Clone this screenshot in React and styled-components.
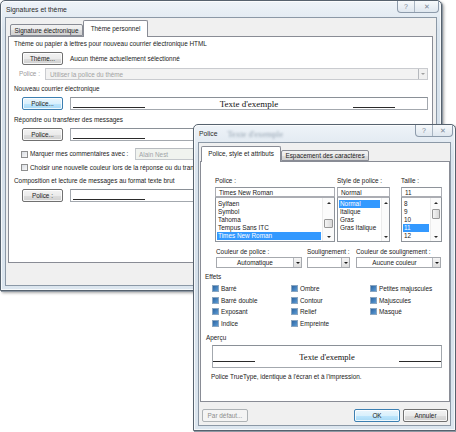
import React from "react";
import styled, { createGlobalStyle, css } from "styled-components";

const GlobalStyle = createGlobalStyle`
  html, body { margin: 0; padding: 0; background: #fff; }
  body {
    font-family: "Liberation Sans", Arial, sans-serif;
    font-size: 6.4px;
    color: #222;
  }
  * { box-sizing: border-box; }
`;

const Desktop = styled.div`
  position: relative;
  width: 456px;
  height: 432px;
  overflow: hidden;
  background: #fff;
`;

// windows sit on a free desktop, so they are placed by coordinates
const Window = styled.div`
  position: absolute;
  left: ${(p) => p.$x}px;
  top: ${(p) => p.$y}px;
  width: ${(p) => p.$w}px;
  height: ${(p) => p.$h}px;
  display: flex;
  flex-direction: column;
  padding: 0 4px 4px;
  border: 1px solid #56626e;
  border-radius: 5px 5px 0 0;
  background: linear-gradient(180deg, #eef3f8 0%, #dbe5ee 10%, #d5e0ea 55%, #dce6ef 100%);
  box-shadow: inset 0 0 0 1px rgba(255, 255, 255, 0.75), 1px 1px 0 #8e98a3,
    2px 2px 3px rgba(0, 0, 0, 0.35);
`;

const TitleBar = styled.div`
  height: ${(p) => p.$h}px;
  margin: 0 -2px;
  padding-left: 3px;
  display: flex;
  align-items: center;
  font-size: 6.8px;
  color: #2b2b2b;
  white-space: nowrap;
`;

// the back window's sample text, seen through the glass frame
const BlurText = styled.span`
  margin-left: 10px;
  font-family: "Liberation Serif", serif;
  font-size: 8.5px;
  color: #97a5b3;
  filter: blur(0.9px);
`;

const Caption = styled.div`
  align-self: flex-start;
  margin-left: auto;
  display: flex;
  height: 12px;
  border: 1px solid #8d9bab;
  border-top: none;
  border-radius: 0 0 4px 4px;
  background: linear-gradient(180deg, #f6f9fb, #dfe7ef);
  overflow: hidden;
`;

const CapBtn = styled.div`
  width: ${(p) => p.$w}px;
  display: flex;
  align-items: center;
  justify-content: center;
  font-size: 7px;
  color: #7b8896;
  & + & {
    border-left: 1px solid #a9b5c2;
  }
`;

const Client = styled.div`
  flex: 1;
  display: flex;
  flex-direction: column;
  background: #f0f0f0;
  border: 1px solid #8b98a6;
`;

const TabStrip = styled.div`
  height: 18px;
  display: flex;
  align-items: flex-end;
  padding-left: ${(p) => p.$pl}px;
`;

const Tab = styled.div`
  position: relative;
  z-index: ${(p) => (p.$active ? 1 : 0)};
  width: ${(p) => p.$w}px;
  height: ${(p) => p.$h}px;
  margin-bottom: ${(p) => (p.$active ? -1 : 0)}px;
  display: flex;
  align-items: center;
  justify-content: center;
  white-space: nowrap;
  border: 1px solid #898c95;
  border-bottom: ${(p) => (p.$active ? "none" : "1px solid #898c95")};
  border-radius: 2px 2px 0 0;
  background: ${(p) =>
    p.$active
      ? "#fff"
      : "linear-gradient(180deg, #f2f2f2 0%, #ebebeb 50%, #dddddd 51%, #d2d2d2 100%)"};
  padding-bottom: ${(p) => (p.$active ? 2 : 0)}px;
`;

const Panel = styled.div`
  height: ${(p) => p.$h}px;
  margin: ${(p) => p.$m};
  background: #fff;
  border: 1px solid #898c95;
  display: flex;
  flex-direction: column;
  padding: ${(p) => p.$pad};
`;

const Label = styled.div`
  height: 10px;
  line-height: 10px;
  margin-top: ${(p) => p.$mt || 0}px;
  margin-left: ${(p) => p.$ml || 0}px;
  white-space: nowrap;
  color: ${(p) => (p.$dim ? "#9a9a9a" : "inherit")};
  width: ${(p) => (p.$w ? `${p.$w}px` : "auto")};
  flex: none;
`;

const Row = styled.div`
  display: flex;
  align-items: center;
  height: ${(p) => p.$h}px;
  margin-top: ${(p) => p.$mt || 0}px;
  padding-left: ${(p) => p.$pl || 0}px;
  gap: ${(p) => p.$gap || 0}px;
  white-space: nowrap;
`;

const Button = styled.button`
  flex: none;
  width: ${(p) => p.$w}px;
  height: 13px;
  padding: 0;
  font: inherit;
  color: #222;
  border: 1px solid #707070;
  border-radius: 2px;
  background: linear-gradient(180deg, #f3f3f3 0%, #ebebeb 50%, #dddddd 51%, #d0d0d0 100%);
  box-shadow: inset 0 0 0 1px rgba(255, 255, 255, 0.8);
  ${(p) =>
    p.$focus &&
    css`
      border-color: #3c7fb1;
      background: linear-gradient(180deg, #eaf6fd 0%, #d9f0fc 50%, #bee6fd 51%, #a7d9f5 100%);
    `}
  ${(p) =>
    p.$disabled &&
    css`
      border-color: #adb2b5;
      background: #f4f4f4;
      color: #8d8d8d;
      box-shadow: none;
    `}
`;

const DropBtn = styled.span`
  flex: none;
  width: ${(p) => p.$w || 8}px;
  height: 100%;
  display: flex;
  align-items: center;
  justify-content: center;
  border-left: 1px solid #b5b8bd;
  background: ${(p) => (p.$dim ? "#f0f0f0" : "linear-gradient(180deg,#f6f6f6,#dedede)")};
  &::after {
    content: "";
    border-left: 2px solid transparent;
    border-right: 2px solid transparent;
    border-top: 2px solid ${(p) => (p.$dim ? "#a0a0a0" : "#1a1a1a")};
  }
`;

const Combo = styled.div`
  flex: ${(p) => (p.$w ? "none" : 1)};
  width: ${(p) => (p.$w ? `${p.$w}px` : "auto")};
  height: ${(p) => p.$h}px;
  display: flex;
  align-items: stretch;
  border: 1px solid ${(p) => (p.$dim ? "#c9cbcf" : "#a6a9ae")};
  background: ${(p) => (p.$dim ? "#f2f2f2" : "#fff")};
  color: ${(p) => (p.$dim ? "#a3a3a3" : "inherit")};
`;

const ComboText = styled.span`
  flex: 1;
  display: flex;
  align-items: center;
  justify-content: ${(p) => (p.$center ? "center" : "flex-start")};
  padding-left: ${(p) => (p.$center ? 0 : 4)}px;
  white-space: nowrap;
  overflow: hidden;
`;

const Sample = styled.div`
  flex: ${(p) => (p.$w ? "none" : 1)};
  width: ${(p) => (p.$w ? `${p.$w}px` : "auto")};
  height: ${(p) => p.$h}px;
  margin: ${(p) => p.$m || 0};
  display: flex;
  align-items: center;
  background: #fff;
  border: 1px solid #a3a8ae;
  border-top-color: #8a9097;
  overflow: hidden;
`;

const SampleLine = styled.span`
  flex: none;
  align-self: flex-end;
  width: ${(p) => p.$w}px;
  height: 1px;
  margin: 0 ${(p) => p.$mr || 0}px ${(p) => p.$mb}px ${(p) => p.$ml || 0}px;
  background: #2a2a2a;
`;

const SampleText = styled.span`
  flex: 1;
  text-align: center;
  font-family: "Liberation Serif", "Times New Roman", serif;
  font-size: ${(p) => p.$size}px;
  color: #111;
  white-space: nowrap;
`;

const PlainBox = styled.span`
  flex: none;
  width: 7px;
  height: 7px;
  border: 1px solid #8e8f8f;
  background: linear-gradient(135deg, #d9dde3, #f7f7f7);
`;

const TriBox = styled.span`
  flex: none;
  width: 7px;
  height: 7px;
  border: 1px solid #8aa6c1;
  background: #e6eef6;
  display: flex;
  align-items: center;
  justify-content: center;
  &::after {
    content: "";
    width: 5px;
    height: 5px;
    background: linear-gradient(135deg, #2d64a0, #5b9bd5);
  }
`;

const TextBox = styled.div`
  flex: none;
  width: ${(p) => p.$w}px;
  height: ${(p) => p.$h}px;
  margin-top: ${(p) => p.$mt || 0}px;
  padding-left: 3px;
  display: flex;
  align-items: center;
  border: 1px solid ${(p) => (p.$dim ? "#c4c8cc" : "#abadb3")};
  border-top-color: ${(p) => (p.$dim ? "#b8bcc0" : "#8e939a")};
  background: ${(p) => (p.$dim ? "#f0f3ef" : "#fff")};
  color: ${(p) => (p.$dim ? "#a0a4a8" : "inherit")};
  white-space: nowrap;
  overflow: hidden;
`;

/* ----- font dialog parts ----- */

const FontRow = styled.div`
  display: flex;
  margin-left: 10px;
`;

const FontCol = styled.div`
  width: ${(p) => p.$w}px;
  margin-left: ${(p) => p.$ml || 0}px;
  display: flex;
  flex-direction: column;
`;

const ListBox = styled.div`
  height: 45px;
  display: flex;
  border: 1px solid #8e939a;
  border-top-color: #abadb3;
  background: #fff;
`;

const ListItems = styled.div`
  flex: 1;
  padding: 2px 1px 0;
  overflow: hidden;
`;

const ListItem = styled.div`
  height: 8px;
  line-height: 8px;
  padding-left: 1px;
  white-space: nowrap;
  ${(p) =>
    p.$sel &&
    css`
      background: #3399ff;
      color: #fff;
    `}
`;

const ScrollBar = styled.div`
  flex: none;
  width: ${(p) => p.$w}px;
  display: flex;
  flex-direction: column;
  align-items: center;
  padding: 4px 0 3px;
  background: #fbfbfb;
  border-left: 1px solid #ececec;
`;

const Arrow = styled.span`
  flex: none;
  border-left: 2px solid transparent;
  border-right: 2px solid transparent;
  ${(p) =>
    p.$down ? "border-top: 2px solid #2b2b2b;" : "border-bottom: 2px solid #2b2b2b;"}
`;

const Thumb = styled.span`
  flex: none;
  width: ${(p) => p.$w}px;
  height: ${(p) => p.$h}px;
  margin-top: ${(p) => p.$mt}px;
  border: 1px solid #979797;
  border-radius: 1px;
  background: linear-gradient(90deg, #f4f4f4, #d8d8d8);
`;

const Grow = styled.span`
  flex: 1;
`;

const ComboRow = styled.div`
  display: flex;
  margin: 5px 0 0 11px;
`;

const EffectsGrid = styled.div`
  display: grid;
  grid-template-columns: 79px 79px 1fr;
  grid-auto-rows: 11.5px;
  margin: 1px 0 0 7px;
`;

const Effect = styled.div`
  display: flex;
  align-items: center;
  gap: 2px;
  white-space: nowrap;
  grid-column: ${(p) => p.$col};
  grid-row: ${(p) => p.$row};
`;

const Footer = styled.div`
  display: flex;
  align-items: center;
  gap: 3px;
  margin-top: 7px;
  padding: 0 2px 0 3px;
`;

const Scroll = ({ w, thumb }) => (
  <ScrollBar $w={w}>
    <Arrow />
    {thumb && <Thumb $w={w - 3} $h={thumb.h} $mt={thumb.top} />}
    <Grow />
    <Arrow $down />
  </ScrollBar>
);

// the sample text of these boxes lies under the font dialog, only the lines show
const BackSample = ({ text }) => (
  <Sample $h={13}>
    <SampleLine $w={72} $ml={2} $mb={1} />
    <SampleText $size={9}>{text}</SampleText>
    <SampleLine $w={42} $mr={32} $mb={1} />
  </Sample>
);

const effects = [
  ["Barré", 1, 1],
  ["Barré double", 1, 2],
  ["Exposant", 1, 3],
  ["Indice", 1, 4],
  ["Ombre", 2, 1],
  ["Contour", 2, 2],
  ["Relief", 2, 3],
  ["Empreinte", 2, 4],
  ["Petites majuscules", 3, 1],
  ["Majuscules", 3, 2],
  ["Masqué", 3, 3],
];

export default function App() {
  return (
    <>
      <GlobalStyle />
      <Desktop>
        <Window $x={0} $y={0} $w={442} $h={291}>
          <TitleBar $h={16}>
            Signatures et thème
            <Caption>
              <CapBtn $w={16}>?</CapBtn>
              <CapBtn $w={24}>✕</CapBtn>
            </Caption>
          </TitleBar>
          <Client>
            <TabStrip $pl={4}>
              <Tab $w={73} $h={12}>Signature électronique</Tab>
              <Tab $active $w={65} $h={17}>Thème personnel</Tab>
            </TabStrip>
            <Panel $h={227} $m="0 3px 0 2px" $pad="2px 4px 0 5px">
              <Label>Thème ou papier à lettres pour nouveau courrier électronique HTML</Label>
              <Row $h={13} $mt={3} $pl={8} $gap={7}>
                <Button $w={41}>Thème...</Button>
                Aucun thème actuellement sélectionné
              </Row>
              <Row $h={12} $mt={3} $pl={5}>
                <Label $dim $w={26}>Police :</Label>
                <Combo $dim $h={12}>
                  <ComboText>Utiliser la police du thème</ComboText>
                  <DropBtn $dim $w={9} />
                </Combo>
              </Row>
              <Label $mt={4}>Nouveau courrier électronique</Label>
              <Row $h={13} $mt={3} $pl={8} $gap={7}>
                <Button $w={41} $focus>Police...</Button>
                <BackSample text="Texte d'exemple" />
              </Row>
              <Label $mt={5}>Répondre ou transférer des messages</Label>
              <Row $h={13} $mt={3} $pl={8} $gap={7}>
                <Button $w={41}>Police...</Button>
                <BackSample />
              </Row>
              <Row $h={12} $mt={7} $pl={7} $gap={2}>
                <PlainBox />
                <Label $w={103}>Marquer mes commentaires avec :</Label>
                <TextBox $dim $w={170} $h={12}>Alain Nest</TextBox>
              </Row>
              <Row $h={12} $mt={1} $pl={7} $gap={2}>
                <PlainBox />
                Choisir une nouvelle couleur lors de la réponse ou du transfert
              </Row>
              <Label $mt={3}>Composition et lecture de messages au format texte brut</Label>
              <Row $h={13} $mt={3} $pl={8} $gap={7}>
                <Button $w={41}>Police :</Button>
                <BackSample />
              </Row>
            </Panel>
          </Client>
        </Window>

        <Window $x={193} $y={124} $w={263} $h={307}>
          <TitleBar $h={17}>
            Police
            <BlurText>Texte d'exemple</BlurText>
            <Caption>
              <CapBtn $w={16}>?</CapBtn>
              <CapBtn $w={20}>✕</CapBtn>
            </Caption>
          </TitleBar>
          <Client>
            <TabStrip $pl={2}>
              <Tab $active $w={80} $h={16}>Police, style et attributs</Tab>
              <Tab $w={88} $h={11}>Espacement des caractères</Tab>
            </TabStrip>
            <Panel $h={241} $m="0 0 0 1px" $pad="14px 6px 0 4px">
              <FontRow>
                <FontCol $w={120}>
                  <Label>Police :</Label>
                  <TextBox $w={120} $h={10} $mt={1}>Times New Roman</TextBox>
                  <ListBox>
                    <ListItems>
                      <ListItem>Sylfaen</ListItem>
                      <ListItem>Symbol</ListItem>
                      <ListItem>Tahoma</ListItem>
                      <ListItem>Tempus Sans ITC</ListItem>
                      <ListItem $sel>Times New Roman</ListItem>
                    </ListItems>
                    <Scroll w={12} thumb={{ top: 15, h: 9 }} />
                  </ListBox>
                </FontCol>
                <FontCol $w={53} $ml={2}>
                  <Label>Style de police :</Label>
                  <TextBox $w={53} $h={10} $mt={1}>Normal</TextBox>
                  <ListBox>
                    <ListItems>
                      <ListItem $sel>Normal</ListItem>
                      <ListItem>Italique</ListItem>
                      <ListItem>Gras</ListItem>
                      <ListItem>Gras Italique</ListItem>
                    </ListItems>
                    <Scroll w={8} />
                  </ListBox>
                </FontCol>
                <FontCol $w={41} $ml={11}>
                  <Label>Taille :</Label>
                  <TextBox $w={41} $h={10} $mt={1}>11</TextBox>
                  <ListBox>
                    <ListItems>
                      <ListItem>8</ListItem>
                      <ListItem>9</ListItem>
                      <ListItem>10</ListItem>
                      <ListItem $sel>11</ListItem>
                      <ListItem>12</ListItem>
                    </ListItems>
                    <Scroll w={11} thumb={{ top: 5, h: 10 }} />
                  </ListBox>
                </FontCol>
              </FontRow>

              <ComboRow>
                <FontCol $w={86}>
                  <Label>Couleur de police :</Label>
                  <Combo $w={86} $h={11}>
                    <ComboText $center>Automatique</ComboText>
                    <DropBtn />
                  </Combo>
                </FontCol>
                <FontCol $w={43} $ml={5}>
                  <Label>Soulignement :</Label>
                  <Combo $w={43} $h={11}>
                    <ComboText $center />
                    <DropBtn />
                  </Combo>
                </FontCol>
                <FontCol $w={85} $ml={6}>
                  <Label>Couleur de soulignement :</Label>
                  <Combo $w={85} $h={11}>
                    <ComboText $center>Aucune couleur</ComboText>
                    <DropBtn />
                  </Combo>
                </FontCol>
              </ComboRow>

              <Label $mt={4}>Effets</Label>
              <EffectsGrid>
                {effects.map(([name, col, row]) => (
                  <Effect key={name} $col={col} $row={row}>
                    <TriBox />
                    {name}
                  </Effect>
                ))}
              </EffectsGrid>

              <Label $mt={4} $ml={1}>Aperçu</Label>
              <Sample $h={23} $m="2px 0 0 7px" $w={230}>
                <SampleLine $w={42} $mb={5} />
                <SampleText $size={8.5}>Texte d'exemple</SampleText>
                <SampleLine $w={42} $mb={5} />
              </Sample>
              <Label $mt={4} $ml={6}>
                Police TrueType, identique à l'écran et à l'impression.
              </Label>
            </Panel>
            <Footer>
              <Button $w={46} $disabled>Par défaut...</Button>
              <Grow />
              <Button $w={46} $focus>OK</Button>
              <Button $w={45}>Annuler</Button>
            </Footer>
          </Client>
        </Window>
      </Desktop>
    </>
  );
}
